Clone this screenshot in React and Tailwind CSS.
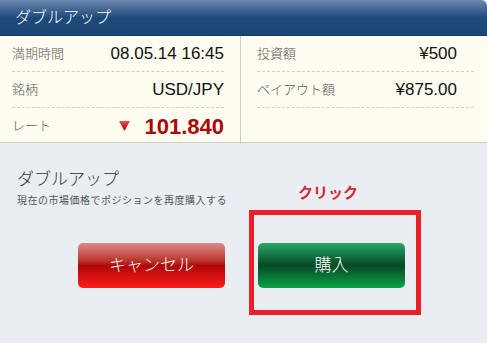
const font = { fontFamily: '"Liberation Sans", "Noto Sans CJK JP", sans-serif' }

function Row({ label, children, last }) {
  return (
    <div className={`flex h-9 items-center justify-between ${last ? '' : 'border-b border-dashed border-[#cfcfcf]'}`}>
      <span className="text-[13px] text-[#5a5a5a] font-light">{label}</span>
      {children}
    </div>
  )
}

export default function App() {
  return (
    <div className="w-[487px] h-[343px] bg-[#e8eef2] overflow-hidden" style={font}>
      {/* Header */}
      <div className="h-9 flex items-center px-[15px] rounded-tr-md bg-gradient-to-b from-[#6a88ad] via-[#1f4a7c] to-[#1b4676] border-b border-[#16365c]">
        <span className="text-white text-[16px] font-light">ダブルアップ</span>
      </div>

      {/* Detail table */}
      <div className="grid grid-cols-[241px_1fr] bg-[#fffcf0] border-b border-[#cfcfcf] h-[107px]">
        <div className="border-r border-[#cfcfcf] pl-3 pr-4">
          <Row label="満期時間">
            <span className="text-[17px] text-[#111]">08.05.14 16:45</span>
          </Row>
          <Row label="銘柄">
            <span className="text-[17px] text-[#111]">USD/JPY</span>
          </Row>
          <Row label="レート" last>
            <span className="flex items-center gap-[14px]">
              <svg width="11" height="10" viewBox="0 0 11 10">
                <defs>
                  <linearGradient id="tri" x1="0" y1="0" x2="0" y2="1">
                    <stop offset="0" stopColor="#f05050" />
                    <stop offset="1" stopColor="#a00000" />
                  </linearGradient>
                </defs>
                <path d="M0 0 L11 0 L5.5 10 Z" fill="url(#tri)" />
              </svg>
              <span className="text-[22px] font-bold text-[#a80a0a]">101.840</span>
            </span>
          </Row>
        </div>
        <div className="pl-4 pr-[13px]">
          <Row label="投資額">
            <span className="text-[17px] text-[#111] pr-[17px]">¥500</span>
          </Row>
          <Row label="ペイアウト額">
            <span className="text-[17px] text-[#111] pr-[17px]">¥875.00</span>
          </Row>
        </div>
      </div>

      {/* Action area */}
      <div className="flex px-[17px] pt-[27px]">
        <div className="w-[232px]">
          <div className="text-[17px] text-[#333] leading-5 font-light">ダブルアップ</div>
          <div className="text-[10px] text-[#555] mt-[3px] tracking-[0.5px]">現在の市場価格でポジションを再度購入する</div>
          <button className="mt-[35px] ml-[61px] w-[147px] h-[45px] rounded-[5px] text-white text-[17px] font-light bg-gradient-to-b from-[#d98a8a] via-[#b00606] to-[#ff1c1c]">
            キャンセル
          </button>
        </div>
        <div className="flex flex-col">
          <div className="text-[15px] font-bold text-[#d62a36] ml-[49px] mt-[13px] leading-5">クリック</div>
          <div className="mt-[7px] w-[172px] h-[105px] border-[5px] border-[#e8202a] pl-[4px] pt-[28px]">
            <button className="w-[147px] h-[45px] rounded-[5px] text-white text-[17px] font-light bg-gradient-to-b from-[#2aa86a] via-[#064a27] to-[#0aa445]">
              購入
            </button>
          </div>
        </div>
      </div>
    </div>
  )
}
